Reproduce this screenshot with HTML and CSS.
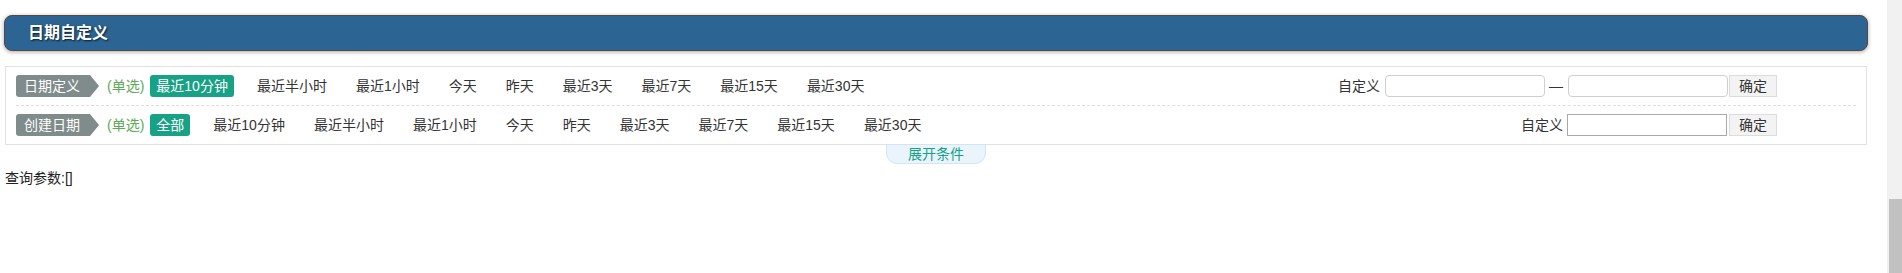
FILE: index.html
```html
<!DOCTYPE html>
<html lang="zh-CN">
<head>
<meta charset="utf-8">
<title>日期自定义</title>
<link rel="stylesheet" href="styles.css">
</head>
<body>
<div class="page">
  <div class="title-bar"><span class="title-text">日期自定义</span></div>

  <div class="filter-box">
    <div class="filter-row">
      <span class="tag">日期定义</span>
      <span class="mode">(单选)</span>
      <div class="options">
        <span class="opt active">最近10分钟</span>
        <span class="opt">最近半小时</span>
        <span class="opt">最近1小时</span>
        <span class="opt">今天</span>
        <span class="opt">昨天</span>
        <span class="opt">最近3天</span>
        <span class="opt">最近7天</span>
        <span class="opt">最近15天</span>
        <span class="opt">最近30天</span>
      </div>
      <div class="custom">
        <span class="custom-label">自定义</span>
        <input class="date-input rounded" type="text">
        <span class="dash">—</span>
        <input class="date-input rounded second" type="text">
        <button class="ok-btn">确定</button>
      </div>
    </div>
    <div class="filter-row last">
      <span class="tag">创建日期</span>
      <span class="mode">(单选)</span>
      <div class="options">
        <span class="opt active">全部</span>
        <span class="opt">最近10分钟</span>
        <span class="opt">最近半小时</span>
        <span class="opt">最近1小时</span>
        <span class="opt">今天</span>
        <span class="opt">昨天</span>
        <span class="opt">最近3天</span>
        <span class="opt">最近7天</span>
        <span class="opt">最近15天</span>
        <span class="opt">最近30天</span>
      </div>
      <div class="custom">
        <span class="custom-label">自定义</span>
        <input class="date-input square" type="text">
        <button class="ok-btn">确定</button>
      </div>
    </div>
  </div>
  <div class="toggle-wrap"><span class="toggle">展开条件</span></div>

  <div class="params">查询参数:[]</div>
</div>
<div class="scrollbar"><div class="thumb"></div></div>
</body>
</html>
```

FILE: styles.css
```css
html, body {
  margin: 0;
  padding: 0;
  background: #fff;
}
body {
  font-family: "Liberation Sans", "Noto Sans CJK SC", sans-serif;
  font-size: 14px;
  color: #333;
  overflow: hidden;
}
.page {
  width: 1887px;
  padding-top: 15px;
}
.title-bar {
  box-sizing: border-box;
  margin: 0 19px 0 4px;
  height: 36px;
  background: #2c6593;
  border: 1px solid #54493f;
  border-radius: 8px;
  box-shadow: 0 1px 4px rgba(0, 0, 0, 0.35);
  display: flex;
  align-items: center;
  padding-left: 23px;
}
.title-text {
  color: #fff;
  font-size: 16px;
  font-weight: bold;
  line-height: 20px;
  text-shadow: 1px 1px 2px #0b1a26;
}
.filter-box {
  margin: 15px 20px 0 5px;
  border: 1px solid #e2e2e2;
}
.filter-row {
  margin: 0 10px;
  padding: 8px 0;
  height: 22px;
  display: flex;
  align-items: center;
  border-bottom: 1px dashed #dedede;
}
.filter-row.last {
  border-bottom: none;
}
.tag {
  box-sizing: border-box;
  width: 83px;
  height: 22px;
  line-height: 22px;
  padding-left: 8px;
  background: #7f8c8b;
  color: #fff;
  border-radius: 3px 0 0 3px;
  clip-path: polygon(0 0, 74px 0, 100% 50%, 74px 100%, 0 100%);
  flex: none;
}
.mode {
  margin-left: 8px;
  color: #5caa57;
  line-height: 22px;
  flex: none;
}
.options {
  display: flex;
  gap: 17px;
  margin-left: 6px;
}
.opt {
  padding: 0 6px;
  line-height: 22px;
  height: 22px;
  border-radius: 3px;
  white-space: nowrap;
}
.opt.active {
  background: #17a185;
  color: #fff;
}
.custom {
  margin-left: auto;
  margin-right: 79px;
  display: flex;
  align-items: center;
}
.custom-label {
  line-height: 22px;
  margin-right: 5px;
}
.date-input {
  box-sizing: border-box;
  width: 160px;
  height: 22px;
  margin: 0;
  padding: 0 4px;
  background: #fff;
  outline: none;
}
.date-input.rounded {
  border: 1px solid #cfcfcf;
  border-radius: 4px;
}
.date-input.second {
  width: 160px;
}
.date-input.square {
  border: 1px solid #a9a9a9;
  border-radius: 0;
  margin-left: -1px;
}
.dash {
  margin: 0 5px 0 4px;
  line-height: 22px;
}
.ok-btn {
  box-sizing: border-box;
  width: 48px;
  height: 22px;
  margin: 0 0 0 1px;
  padding: 0;
  background: #f3f3f3;
  border: 1px solid #dcdcdc;
  font-family: "Liberation Sans", "Noto Sans CJK SC", sans-serif;
  font-size: 14px;
  color: #333;
  line-height: 20px;
}
.filter-row.last .ok-btn {
  margin-left: 2px;
}
.toggle-wrap {
  margin: -1px 20px 0 5px;
  display: flex;
  justify-content: center;
}
.toggle {
  box-sizing: border-box;
  width: 100px;
  height: 20px;
  line-height: 18px;
  text-align: center;
  color: #17a185;
  background: #e9f4fd;
  border: 1px solid #d3e5f3;
  border-radius: 0 0 11px 11px;
}
.params {
  margin: 4px 0 0 5px;
  line-height: 20px;
  color: #222;
}
.scrollbar {
  position: fixed;
  top: 0;
  right: 0;
  width: 15px;
  height: 100%;
  background: #f1f1f1;
}
.thumb {
  position: absolute;
  top: 199px;
  left: 2px;
  right: 0;
  bottom: 0;
  background: #c1c1c1;
}
```
